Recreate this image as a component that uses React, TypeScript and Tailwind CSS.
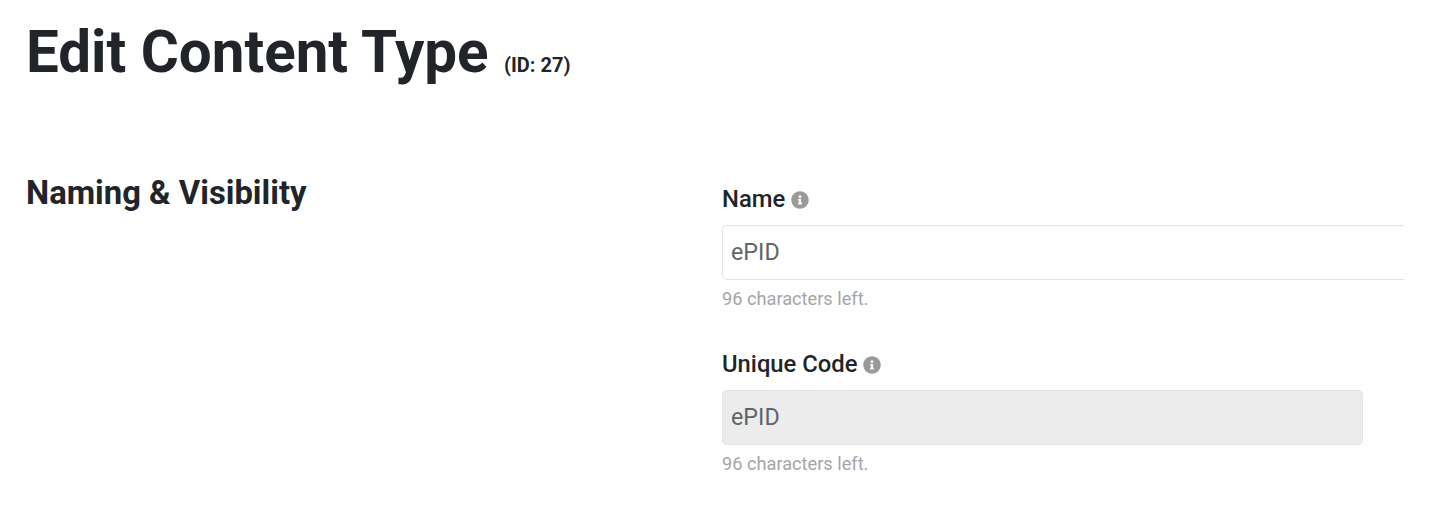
import React from 'react';
import { FaInfoCircle } from 'react-icons/fa';

interface FieldProps {
  label: string;
  value: string;
  disabled?: boolean;
}

function Field({ label, value, disabled }: FieldProps) {
  return (
    <div className="flex flex-col">
      <label className="flex items-center gap-[6px] h-[24px] text-[23.8px] font-medium text-[#212529]">
        {label}
        <FaInfoCircle size={18} className="text-[#9a9a9a]" />
      </label>
      {disabled ? (
        <div className="mt-[13px] h-[55px] w-[641px] flex items-center px-[8px] text-[23.3px] text-[#5f6468] bg-[#ececec] border border-[#e3e3e3] rounded-[5px]">
          {value}
        </div>
      ) : (
        <div className="mt-[13px] h-[55px] w-[682px] flex items-center px-[8px] text-[23.3px] text-[#5f6468] bg-white border border-r-0 border-[#e3e3e3] rounded-l-[5px]">
          {value}
        </div>
      )}
      <p className="mt-[9px] h-[20px] leading-[20px] text-[18.2px] text-[#a3a5a8]">96 characters left.</p>
    </div>
  );
}

export default function App() {
  return (
    <div className="w-[1434px] h-[522px] overflow-hidden bg-white px-[26px] pt-[17px] font-['Roboto',sans-serif] text-[#212529]">
      <h1 className="h-[70px] leading-[70px] text-[58.3px] font-bold">
        Edit Content Type <small className="text-[20px] font-bold ml-[1px]">(ID: 27)</small>
      </h1>
      <div className="flex mt-[88px]">
        <h2 className="w-[696px] text-[32.8px] leading-[36px] font-bold">Naming &amp; Visibility</h2>
        <div className="flex flex-col gap-[44px] pt-[13px]">
          <Field label="Name" value="ePID" />
          <Field label="Unique Code" value="ePID" disabled />
        </div>
      </div>
    </div>
  );
}
